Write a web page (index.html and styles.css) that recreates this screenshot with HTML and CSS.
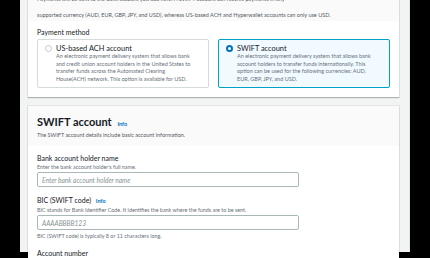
FILE: index.html
```html
<!DOCTYPE html>
<html lang="en">
<head>
  <meta charset="UTF-8" />
  <title>Payment method</title>
  <link rel="stylesheet" href="styles.css">
</head>
<body>

<div class="frame">
  <div class="card card-top">
    <div class="card-head">
      <p class="desc first">Payments will be sent to the bank account you add here. A SWIFT account can receive payments in any</p>
      <p class="desc">supported currency (AUD, EUR, GBP, JPY, and USD), whereas US-based ACH and Hyperwallet accounts can only use USD.</p>
    </div>
    <div class="card-body">
      <div class="label">Payment method</div>
      <div class="tiles">
        <label class="tile">
          <span class="radio"></span>
          <span class="tile-text">
            <span class="tile-title">US-based ACH account</span>
            <span class="tile-desc">An electronic payment delivery system that allows bank<br>and credit union account holders in the United States to<br>transfer funds across the Automated Clearing<br>House(ACH) network. This option is available for USD.</span>
          </span>
        </label>
        <label class="tile selected">
          <span class="radio"></span>
          <span class="tile-text">
            <span class="tile-title">SWIFT account</span>
            <span class="tile-desc">An electronic payment delivery system that allows bank<br>account holders to transfer funds internationally. This<br>option can be used for the following currencies: AUD,<br>EUR, GBP, JPY, and USD.</span>
          </span>
        </label>
      </div>
    </div>
  </div>

  <div class="card">
    <div class="card-head head-swift">
      <h2>SWIFT account <a class="info">Info</a></h2>
      <p class="desc">The SWIFT account details include basic account information.</p>
    </div>
    <div class="card-body form">
      <div class="field">
        <div class="label">Bank account holder name</div>
        <div class="hint">Enter the bank account holder's full name.</div>
        <input type="text" placeholder="Enter bank account holder name">
      </div>
      <div class="field">
        <div class="label">BIC (SWIFT code) <a class="info">Info</a></div>
        <div class="hint">BIC stands for Bank Identifier Code. It identifies the bank where the funds are to be sent.</div>
        <input type="text" placeholder="AAAABBBB123">
        <div class="hint after">BIC (SWIFT code) is typically 8 or 11 characters long.</div>
      </div>
      <div class="field">
        <div class="label">Account number</div>
      </div>
    </div>
  </div>
</div>

</body>
</html>
```

FILE: styles.css
```css
* {
  margin: 0;
  padding: 0;
  box-sizing: border-box;
}

html, body {
  height: 100%;
  overflow: hidden;
}

body {
  background: #000;
  font-family: Lato, 'Open Sans', sans-serif;
  color: #16191f;
}

.frame {
  margin-left: 20px;
  width: 390px;
  height: 258px;
  background: #f2f3f3;
  padding: 0 10px 0 8px;
  border-right: 1px solid #e4e6e6;
}

.card {
  background: #fff;
  box-shadow: 0 1px 1px rgba(0, 28, 36, 0.25), 0 0 0 1px rgba(0, 28, 36, 0.06);
  margin-bottom: 9px;
}

.card-top {
  margin-top: -6px;
}

.card-head {
  background: #fafafa;
  padding: 0 9px 1px;
}

.desc {
  font-size: 5.5px;
  line-height: 10px;
  color: #545b64;
}

.desc.first {
  margin-bottom: 6px;
}

.card-body {
  padding: 6px 9px 9px;
}

.label {
  font-size: 7px;
  line-height: 10px;
  color: #16191f;
}

.tiles {
  display: grid;
  grid-template-columns: 1fr 1fr;
  gap: 9px;
  margin-top: 2px;
}

.tile {
  display: flex;
  gap: 4px;
  border: 1px solid #d5dbdb;
  border-radius: 2px;
  padding: 4px 6px 6px 7px;
  height: 49px;
}

.tile.selected {
  border-color: #00a1c9;
  background: #f1faff;
}

.radio {
  flex: none;
  width: 7px;
  height: 7px;
  margin-top: 1px;
  border-radius: 50%;
  border: 1px solid #c4cbcc;
  background: #fff;
}

.selected .radio {
  border: 2px solid #0073bb;
}

.tile-text {
  display: flex;
  flex-direction: column;
  white-space: nowrap;
}

.tile-title {
  font-size: 7.4px;
  line-height: 9px;
  color: #16191f;
}

.tile-desc {
  font-size: 5.5px;
  line-height: 7.7px;
  color: #687078;
}

.head-swift {
  padding: 10px 9px 6px;
}

h2 {
  font-size: 11px;
  line-height: 12px;
  font-weight: 700;
}

.info {
  font-size: 5.6px;
  font-weight: 700;
  color: #0073bb;
  margin-left: 3px;
}

.form {
  padding-top: 7px;
}

.field {
  margin-bottom: 8px;
}

.hint {
  font-size: 5.4px;
  line-height: 8px;
  color: #687078;
}

.hint.after {
  margin-top: 2px;
}

input {
  display: block;
  width: 262px;
  height: 15px;
  margin-top: 1px;
  border: 1px solid #aab7b8;
  border-radius: 2px;
  padding: 0 4px;
  font-family: inherit;
  font-size: 6.6px;
  background: #fff;
}

input::placeholder {
  font-style: italic;
  color: #879596;
}
```
